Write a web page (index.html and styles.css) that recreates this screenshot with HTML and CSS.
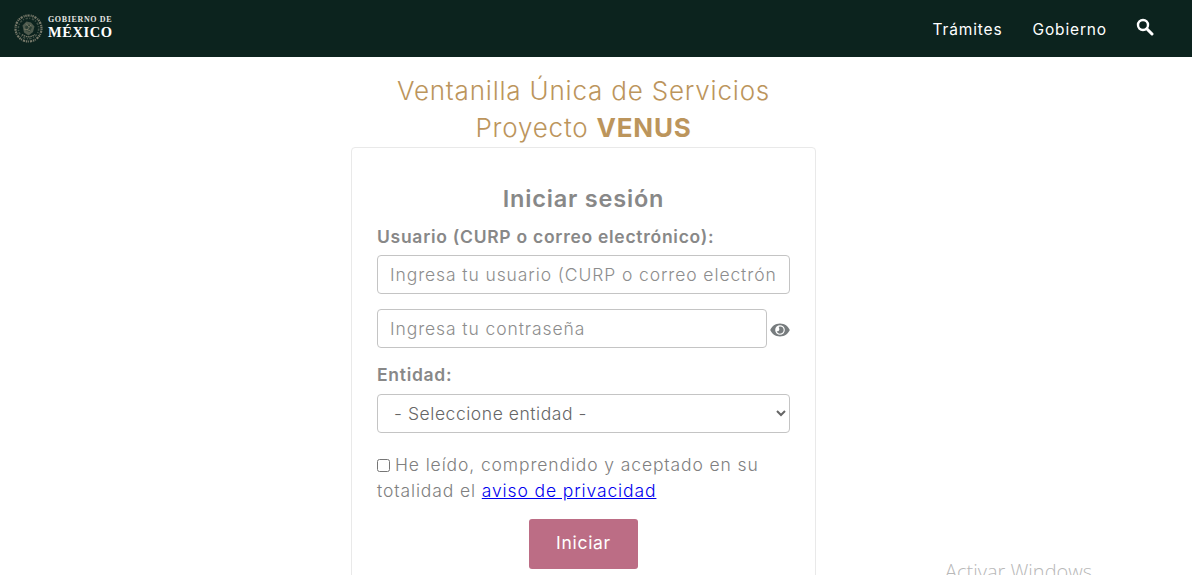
FILE: index.html
```html
<!DOCTYPE html>
<html lang="es">
<head>
<meta charset="utf-8">
<title>Ventanilla Única de Servicios</title>
<link rel="stylesheet" href="styles.css">
</head>
<body>
<header class="navbar">
  <a class="brand" href="#">
    <svg class="emblem" width="29" height="29" viewBox="0 0 29 29" aria-hidden="true">
      <circle cx="14.5" cy="14.5" r="13" fill="none" stroke="#77796a" stroke-width="2.2" stroke-dasharray="1.4 0.8 2.2 1.1 1 0.7"/>
      <circle cx="14.5" cy="14.5" r="10.2" fill="none" stroke="#3f4f45" stroke-width="1.6" stroke-dasharray="2.4 1.2 1.2 1.6"/>
      <path d="M8.5 11.5 L12.5 7.5 L17 8.5 L20.5 12.5 L19 18 L14.5 21.5 L10 18.5 Z" fill="#4f5b4e"/>
      <path d="M11 12.5 L15 10.5 L18 13.5 L15.5 18 L12 16.5 Z" fill="#2c3f35"/>
      <path d="M12 9.5 L15 13 M17 11 L13 16 M10 15 L16 16.5" stroke="#7f826c" stroke-width="0.8"/>
      <path d="M8 20.5 Q14.5 25 21 20.5" fill="none" stroke="#77796a" stroke-width="1.4" stroke-dasharray="1.5 0.7"/>
    </svg>
    <span class="brand-text">
      <span class="brand-top">GOBIERNO DE</span>
      <span class="brand-main">MÉXICO</span>
    </span>
  </a>
  <nav class="nav-links">
    <a href="#">Trámites</a>
    <a href="#">Gobierno</a>
    <a href="#" class="search" aria-label="Buscar">
      <svg width="18" height="18" viewBox="0 0 18 18" aria-hidden="true">
        <circle cx="7" cy="7" r="5" fill="none" stroke="#fff" stroke-width="2.4"/>
        <path d="M10.8 10.8 L16 16" stroke="#fff" stroke-width="3" stroke-linecap="round"/>
      </svg>
    </a>
  </nav>
</header>

<main class="page">
  <h1 class="title">Ventanilla Única de Servicios<br>Proyecto <strong>VENUS</strong></h1>
  <form class="card">
    <h2 class="card-title">Iniciar sesión</h2>
    <label class="label" for="usuario">Usuario (CURP o correo electrónico):</label>
    <input class="field" id="usuario" type="text" placeholder="Ingresa tu usuario (CURP o correo electrónico)">
    <div class="password-row">
      <input class="field" type="password" placeholder="Ingresa tu contraseña">
      <svg class="eye" width="20" height="14" viewBox="0 0 20 14" aria-hidden="true">
        <path fill-rule="evenodd" fill="#777c7e" d="M10 0.5C5.4 0.5 1.8 3.3 0.2 7c1.6 3.7 5.2 6.5 9.8 6.5s8.2-2.8 9.8-6.5C18.2 3.3 14.6 0.5 10 0.5ZM10 2.2a4.8 4.8 0 1 1 0 9.6a4.8 4.8 0 0 1 0-9.6Z"/>
        <path fill="#777c7e" d="M10 3.4a3.6 3.6 0 1 1-3.4 4.7a2 2 0 0 0 2.6-2.6a2 2 0 0 0-.6-1.6a3.6 3.6 0 0 1 1.4-.5Z"/>
      </svg>
    </div>
    <label class="label label-entity" for="entidad">Entidad:</label>
    <select class="field select" id="entidad">
      <option>- Seleccione entidad -</option>
    </select>
    <p class="consent"><input class="check" type="checkbox" id="aviso"><label for="aviso">He leído, comprendido y aceptado en su totalidad el</label> <a href="#">aviso de privacidad</a></p>
    <div class="actions"><button class="btn" type="button">Iniciar</button></div>
  </form>
</main>
<div class="watermark">Activar Windows</div>
</body>
</html>
```
FILE: styles.css
```css
* { box-sizing: border-box; }
html, body { height: 100%; }
body {
  margin: 0;
  height: 575px;
  overflow: hidden;
  position: relative;
  background: #fff;
  font-family: "Inter", "Liberation Sans", sans-serif;
  color: #888;
}
.navbar {
  height: 57px;
  background: #0c231e;
  display: flex;
  justify-content: space-between;
  align-items: center;
  padding: 0 38px 0 14px;
}
.brand { display: flex; align-items: center; gap: 5px; text-decoration: none; color: #fff; }
.emblem { display: block; }
.brand-text {
  display: flex;
  flex-direction: column;
  font-family: "Liberation Serif", serif;
  font-weight: 700;
  line-height: 1;
  margin-top: -1px;
}
.brand-top { font-size: 8px; letter-spacing: 0.65px; color: #e6e6e2; }
.brand-main { font-size: 14.5px; letter-spacing: 0.55px; margin-top: 1px; }
.nav-links { display: flex; align-items: center; gap: 30px; }
.nav-links a { color: #fff; text-decoration: none; font-size: 15.5px; letter-spacing: 0.85px; padding-top: 2px; }
.nav-links .search { display: flex; padding-top: 0; margin-bottom: 3px; margin-left: -1px; }
.page { display: flex; flex-direction: column; align-items: center; padding-right: 25px; }
.title {
  margin: 15px 0 0;
  font-size: 26px;
  line-height: 37px;
  font-weight: 300;
  letter-spacing: 0.8px;
  text-align: center;
  color: #bc955c;
}
.title strong { font-weight: 700; }
.card {
  width: 465px;
  margin-top: 1px;
  height: 460px;
  border: 1px solid #e9e9e9;
  border-radius: 4px;
  padding: 36px 25px 0;
}
.card-title {
  margin: 0 0 12px;
  font-size: 23.5px;
  line-height: 30px;
  font-weight: 600;
  letter-spacing: 0.8px;
  text-align: center;
  color: #888;
}
.label {
  display: block;
  font-size: 17.5px;
  line-height: 22px;
  font-weight: 600;
  letter-spacing: 0.72px;
  color: #888;
  margin-bottom: 7px;
}
.field {
  display: block;
  width: 100%;
  height: 39px;
  padding: 0 12px;
  border: 1px solid #c4c4c4;
  border-radius: 4px;
  background: #fff;
  font: 300 17.5px "Inter", "Liberation Sans", sans-serif;
  letter-spacing: 0.9px;
  color: #555;
}
.field::placeholder { color: #8d8d8d; opacity: 1; }
.password-row { display: flex; align-items: center; gap: 3px; margin-top: 15px; }
.password-row .field { flex: 1; min-width: 0; }
.eye { flex: none; margin-top: 2px; }
.label-entity { margin-top: 16px; margin-bottom: 8px; }
.select { padding-left: 12px; font-weight: 350; letter-spacing: 0.55px; color: #666; }
.consent {
  margin: 19px 0 0;
  font-size: 17.5px;
  line-height: 26px;
  font-weight: 300;
  letter-spacing: 0.88px;
  color: #808080;
}
.check { width: 13px; height: 13px; margin: 0 5px 0 0; vertical-align: -1px; }
.consent a { color: #0000ee; }
.actions { display: flex; justify-content: center; margin-top: 15px; }
.btn {
  width: 109px;
  height: 50px;
  border: 0;
  border-radius: 3px;
  padding: 0 0 4px;
  background: #bc6d85;
  color: #fff;
  font: 400 17.5px "Inter", "Liberation Sans", sans-serif;
  letter-spacing: 0.7px;
}
.watermark {
  position: absolute;
  left: 945px;
  top: 558px;
  font: 300 20px "Open Sans", sans-serif;
  color: #b8b8b8;
}
```
